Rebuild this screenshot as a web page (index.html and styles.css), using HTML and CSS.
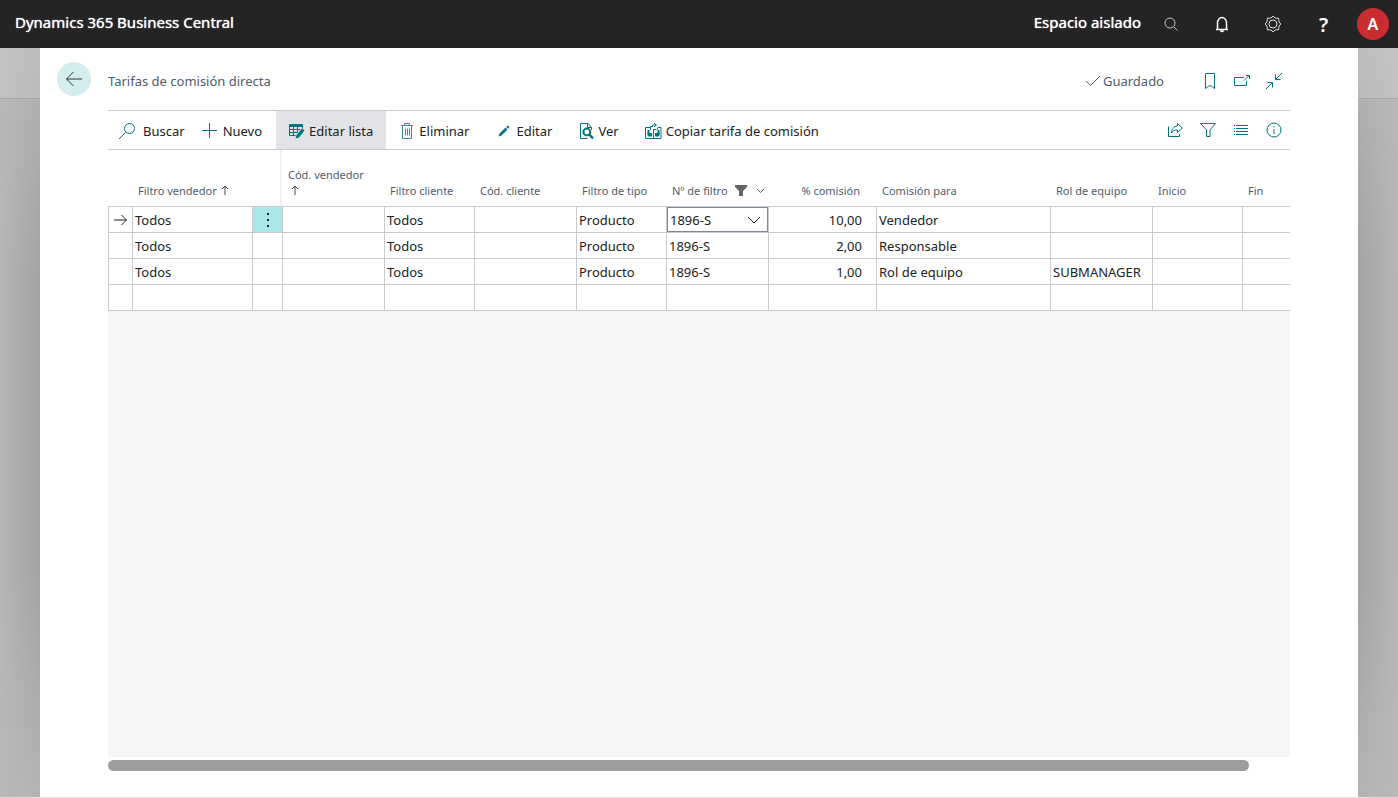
FILE: index.html
```html
<!DOCTYPE html>
<html lang="es">
<head>
<meta charset="utf-8">
<meta name="viewport" content="width=device-width, initial-scale=1">
<title>Tarifas de comisión directa - Dynamics 365 Business Central</title>
<link rel="stylesheet" href="styles.css">
</head>
<body>
<header class="topbar">
  <span class="brand">Dynamics 365 Business Central</span>
  <span class="environment">Espacio aislado</span>
  <nav class="top-actions" aria-label="Herramientas">
    <button class="top-button" type="button" aria-label="Buscar">
      <svg class="dim" width="16" height="16" viewBox="0 0 16 16"><circle cx="7" cy="7" r="5"/><path d="M10.6 10.6 14.5 14.5"/></svg>
    </button>
    <button class="top-button" type="button" aria-label="Notificaciones">
      <svg class="bell" width="16" height="18" viewBox="0 0 16 18"><path d="M3.500 14V8a4.500 5.500 0 0 1 9 0v6M2 14.500h12M6.500 15.500c.8 1.300 2.200 1.300 3 0"/></svg>
    </button>
    <button class="top-button" type="button" aria-label="Configuración">
      <svg class="bright" width="18" height="18" viewBox="0 0 18 18"><circle cx="9" cy="9" r="4"/><path d="M9 1C10 2.800 11.500 3.400 14.700 3.300 14.600 6.500 15.200 8 17 9 15.200 10 14.600 11.500 14.700 14.700 11.500 14.600 10 15.200 9 17 8 15.200 6.500 14.600 3.300 14.700 3.400 11.500 2.800 10 1 9 2.800 8 3.400 6.500 3.300 3.300 6.500 3.400 8 2.800 9 1Z"/></svg>
    </button>
    <button class="top-button help" type="button" aria-label="Ayuda">?</button>
    <button class="avatar" type="button" aria-label="Cuenta">A</button>
  </nav>
</header>
<div class="stage">
  <main class="sheet">
    <button class="back" type="button" aria-label="Atrás">
      <svg width="18" height="16" viewBox="0 0 18 16"><path d="M17 8H1.500M8.500 1 1.500 8l7 7"/></svg>
    </button>
    <div class="content">
      <div class="title-row">
        <h1 class="title">Tarifas de comisión directa</h1>
        <span class="saved"><svg width="16" height="12" viewBox="0 0 16 12"><path d="M1 6l4.500 4.500L15 1"/></svg>Guardado</span>
        <div class="icon-row">
          <button type="button" aria-label="Marcador"><svg width="16" height="18" viewBox="0 0 16 18"><path d="M3.500 1.500h9v15L9.500 14h-3l-3 2.500Z"/></svg></button>
          <button type="button" aria-label="Abrir en ventana nueva"><svg width="16" height="16" viewBox="0 0 16 16"><path d="M10 4.500H.5v8h12V8M10 7.500 15 2.500M12 2.500h3.500V6"/></svg></button>
          <button type="button" aria-label="Contraer"><svg width="18" height="18" viewBox="0 0 18 18"><path d="M1 17l6.500-6.500M2.500 10.500h5v5M17 1l-6.500 6.500M10.500 2.500v5h5"/></svg></button>
        </div>
      </div>
      <div class="toolbar" role="toolbar" aria-label="Acciones">
        <button class="action search" type="button"><svg width="18" height="18" viewBox="0 0 18 18"><circle cx="11.500" cy="6.500" r="5"/><path d="M7.800 10.200 1 17"/></svg>Buscar</button>
        <button class="action new" type="button"><svg width="16" height="16" viewBox="0 0 16 16"><path d="M7.500 0v15M0 7.500h15"/></svg>Nuevo</button>
        <button class="action active" type="button" aria-pressed="true"><svg width="16" height="16" viewBox="0 0 16 16"><path d="M.5 1.500h13v2H.5Z" fill="currentColor"/><path d="M.5 3.500v9h6M.5 6.500h11M.5 9.500h8M4.500 3.500v9M8.500 3.500v6M13.500 3.500v2"/><path d="M6.500 15.500 7.500 12 13 5.500l2.500 2L10 14.500Z" fill="currentColor" stroke="none"/></svg>Editar lista</button>
        <button class="action delete" type="button"><svg width="14" height="18" viewBox="0 0 14 18"><g class="soft"><path d="M2.500 4v12.500h9V4M1 3.500h12M4.500 3V1.500h5V3" /><path d="M5.500 6.500v7M7.500 6.500v7M9.500 6.500v7"/></g></svg>Eliminar</button>
        <button class="action edit" type="button"><svg width="12" height="12" viewBox="0 0 12 12"><path d="M.5 11.500 1.500 8.500 7.500 2.500l2 2-6 6ZM8.200 1.800 9.800.5l1.700 1.600-1.300 1.700Z" fill="currentColor" stroke="none"/></svg>Editar</button>
        <button class="action view" type="button"><svg width="15" height="17" viewBox="0 0 15 17"><path d="M12.500 7V4.500L9 .5H1.500v15h7M8.500.5v4h4"/><circle cx="7.800" cy="9" r="3.400" stroke-width="2"/><path d="m10.300 11.500 3.700 4" stroke-width="2.500"/></svg>Ver</button>
        <button class="action copy" type="button"><svg width="17" height="17" viewBox="0 0 17 17"><path d="M5 4.500H.5v11h15.500v-11h-3M8.500 7v8.500M5.500 7V3.500H8M8 6.500h3.500M6.500 3.500 8 2h3M9 0l2.500 2L9 4M12.500 4.500v2"/><path d="M3.500 7v3M13.500 7v3" stroke-width="2"/><path d="M2 10h5v3.500H3ZM10 10h5l-1 3.500h-4Z" fill="currentColor" stroke="none"/></svg>Copiar tarifa de comisión</button>
        <div class="icon-row tools">
          <button type="button" aria-label="Compartir"><svg width="17" height="16" viewBox="0 0 17 16"><path d="M1.500 4.500v10h11V12M10.500 4V1.500L15.500 6l-5 4.500V8C7.500 7.800 5.700 9 4.500 11 4.500 7.500 6.500 4.200 10.500 4Z"/></svg></button>
          <button type="button" aria-label="Filtrar"><svg width="18" height="16" viewBox="0 0 18 16"><path d="M1.500 1.500h15L11 8v6.500H7.500V8Z"/></svg></button>
          <button type="button" aria-label="Vista de lista"><svg width="16" height="14" viewBox="0 0 16 14"><path d="M1 2.500h1M3 2.500h12M1 5.500h1M3 5.500h12M1 8.500h1M3 8.500h12M1 11.500h1M3 11.500h12"/></svg></button>
          <button type="button" aria-label="Información"><svg width="16" height="16" viewBox="0 0 16 16"><circle cx="8" cy="8" r="7"/><path d="M8 7v5M8 4.200v1.300"/></svg></button>
        </div>
      </div>
      <div class="grid-area">
        <table class="grid">
          <colgroup>
            <col class="w-mark"><col class="w-seller"><col class="w-menu"><col class="w-code"><col class="w-short"><col class="w-code"><col class="w-short"><col class="w-code"><col class="w-rate"><col class="w-target"><col class="w-code"><col class="w-short"><col>
          </colgroup>
          <thead>
            <tr>
              <th></th>
              <th colspan="2" class="frozen">Filtro vendedor<svg class="sort" width="8" height="10" viewBox="0 0 8 10"><path d="M4 10V1M1 4l3-3 3 3"/></svg></th>
              <th>Cód. vendedor<br><svg class="sort under" width="8" height="10" viewBox="0 0 8 10"><path d="M4 10V1M1 4l3-3 3 3"/></svg></th>
              <th>Filtro cliente</th>
              <th>Cód. cliente</th>
              <th>Filtro de tipo</th>
              <th>Nº de filtro<svg class="funnel" width="12" height="11" viewBox="0 0 12 11"><path d="M0 0h12v2L8 6v5H4V6L0 2Z"/></svg><svg class="more" width="9" height="6" viewBox="0 0 9 6"><path d="m1 1 3.500 3.500L8 1"/></svg></th>
              <th class="num">% comisión</th>
              <th>Comisión para</th>
              <th>Rol de equipo</th>
              <th>Inicio</th>
              <th>Fin</th>
            </tr>
          </thead>
          <tbody>
            <tr>
              <td class="mark"><svg width="14" height="12" viewBox="0 0 14 12"><path d="M0 6h12.500M7.500 1l5 5-5 5"/></svg></td>
              <td>Todos</td>
              <td class="menu"><button type="button" aria-label="Más opciones"><svg width="4" height="16" viewBox="0 0 4 16"><path d="M1 1h2v2H1ZM1 7h2v2H1ZM1 13h2v2H1Z"/></svg></button></td>
              <td></td><td>Todos</td><td></td><td>Producto</td>
              <td class="editing"><div class="combo"><input type="text" value="1896-S" aria-label="Nº de filtro"><button type="button" aria-label="Elegir valor"><svg width="14" height="8" viewBox="0 0 14 8"><path d="m1 1 6 6 6-6"/></svg></button></div></td>
              <td class="num">10,00</td><td>Vendedor</td><td></td><td></td><td></td>
            </tr>
            <tr><td></td><td>Todos</td><td></td><td></td><td>Todos</td><td></td><td>Producto</td><td>1896-S</td><td class="num">2,00</td><td>Responsable</td><td></td><td></td><td></td></tr>
            <tr><td></td><td>Todos</td><td></td><td></td><td>Todos</td><td></td><td>Producto</td><td>1896-S</td><td class="num">1,00</td><td>Rol de equipo</td><td>SUBMANAGER</td><td></td><td></td></tr>
            <tr><td></td><td></td><td></td><td></td><td></td><td></td><td></td><td></td><td></td><td></td><td></td><td></td><td></td></tr>
          </tbody>
        </table>
      </div>
      <div class="scroll-track"><div class="scroll-thumb"></div></div>
    </div>
  </main>
</div>
</body>
</html>
```

FILE: styles.css
```css
* { box-sizing: border-box; }

:root {
  --teal: #00757f;
  --line: #c8cace;
  --label: #505c6d;
  --ink: #212121;
}

body {
  margin: 0;
  min-height: 100vh;
  display: flex;
  flex-direction: column;
  font-family: "Noto Sans", "Open Sans", sans-serif;
  font-size: 13px;
  color: var(--ink);
}

button {
  font: inherit;
  color: inherit;
  border: 0;
  padding: 0;
  background: none;
  display: flex;
  align-items: center;
  justify-content: center;
}

svg {
  fill: none;
  stroke: currentColor;
  flex: none;
}

.topbar {
  height: 48px;
  display: flex;
  align-items: center;
  padding: 0 9px 0 15px;
  background: #242424;
  color: #fff;
}

.brand, .environment {
  font-size: 15px;
  line-height: 20px;
  padding-bottom: 4px;
  text-shadow: 0 0 1px #fff;
}

.brand { margin-right: auto; }

.top-actions {
  display: flex;
  align-items: center;
  margin-left: 4px;
}

.top-button {
  width: 51px;
  height: 50px;
}

.dim { color: #c4c4c4; }

.bright { color: #e4e4e4; }

.bell { stroke-width: 1.5; }

.help {
  font-size: 20px;
  font-weight: 600;
}

.avatar {
  width: 32px;
  height: 32px;
  margin-left: 8px;
  border-radius: 50%;
  background: #ca2d31;
  font-size: 16px;
  font-weight: 600;
}

.stage {
  flex: 1;
  display: flex;
  padding: 0 40px;
  border-bottom: 1px solid #e1e1e1;
  background:
    linear-gradient(rgba(255, 255, 255, 0.14) 50px, rgba(0, 0, 0, 0.07) 50px, rgba(0, 0, 0, 0.07) 51px, transparent 51px),
    linear-gradient(rgba(184, 187, 185, 0.7), rgba(184, 187, 185, 0) 30%, rgba(184, 187, 185, 0) 70%, rgba(184, 187, 185, 0.7)),
    linear-gradient(90deg, #b4b7b5, #a2a4a3 40px, #a2a4a3 calc(100% - 40px), #b4b7b5);
}

.sheet {
  flex: 1;
  min-width: 0;
  display: flex;
  padding: 0 68px 0 17px;
  background: #fff;
}

.back {
  width: 34px;
  height: 34px;
  margin: 14px 17px 0 0;
  flex: none;
  border-radius: 50%;
  background: #d4eeee;
  color: #333;
}

.content {
  flex: 1;
  min-width: 0;
  display: flex;
  flex-direction: column;
}

.title-row {
  height: 62px;
  display: flex;
  align-items: center;
  padding: 4px 6px 0 0;
  color: var(--label);
}

.title {
  margin: 0 auto 0 0;
  font-size: 13px;
  font-weight: 400;
}

.saved {
  display: flex;
  align-items: center;
  gap: 2px;
  margin-right: 36px;
}

.icon-row {
  display: flex;
  align-items: center;
  gap: 12px;
  color: var(--teal);
}

.icon-row button {
  width: 20px;
  height: 20px;
}

.toolbar {
  height: 40px;
  display: flex;
  align-items: stretch;
  border-top: 1px solid var(--line);
  border-bottom: 1px solid var(--line);
}

.action {
  gap: 4px;
  padding: 2px 13px 0;
  white-space: nowrap;
}

.action svg { color: var(--teal); }

.soft { opacity: 0.8; }

.search { gap: 7px; padding: 2px 8px 0 10px; }
.new { padding: 2px 14px 0 9px; }
.new svg { margin-right: 1px; }
.active { background: #e2e3e7; }
.delete { gap: 5px; padding-left: 14px; }
.edit { gap: 6px; padding-left: 16px; }
.view { padding-left: 14px; }

.tools {
  margin-left: auto;
  padding-right: 6px;
  gap: 13px;
}

.grid-area {
  flex: 1;
  overflow: hidden;
  background: #f4f5f7;
}

.grid {
  width: 100%;
  table-layout: fixed;
  border-collapse: separate;
  border-spacing: 0;
  background: #fff;
}

.w-mark { width: 24px; }
.w-seller { width: 120px; }
.w-menu { width: 30px; }
.w-code { width: 102px; }
.w-short { width: 90px; }
.w-rate { width: 108px; }
.w-target { width: 174px; }

.grid th {
  height: 57px;
  padding: 0 0 7px 6px;
  border-bottom: 1px solid var(--line);
  vertical-align: bottom;
  text-align: left;
  white-space: nowrap;
  font-size: 11px;
  line-height: 16px;
  font-weight: 400;
  color: var(--label);
}

.grid th.frozen { border-right: 2px solid #f1f1f2; }

.grid td {
  height: 26px;
  padding: 0 2px;
  border-left: 1px solid var(--line);
  border-bottom: 1px solid var(--line);
  line-height: 20px;
  white-space: nowrap;
}

.grid th.num { padding-right: 16px; text-align: right; }
.grid td.num { padding-right: 14px; text-align: right; }

.sort { margin-left: 4px; color: #444; }
.sort.under { margin: 0 3px; }

.funnel {
  margin: 0 9px 0 7px;
  fill: #666;
  stroke: none;
  vertical-align: -1px;
}

.more { vertical-align: 1px; }

.mark svg { display: block; margin-left: 3px; }

.grid td.menu { padding: 0; background: #a9e7e9; }
.menu button { width: 100%; height: 25px; }
.menu svg { fill: #222; stroke: none; }

.grid td.editing { padding: 0; }

.combo {
  display: flex;
  height: 25px;
  border: 1px solid #7c8694;
}

.combo input {
  flex: 1;
  min-width: 0;
  border: 0;
  padding: 0 2px;
  font: inherit;
  color: inherit;
  background: none;
  outline: 0;
}

.combo button { width: 26px; }

.scroll-track {
  margin: 3px 0 26px;
}

.scroll-thumb {
  width: 1141px;
  max-width: 100%;
  height: 11px;
  border-radius: 6px;
  background: #9e9e9e;
}
```
